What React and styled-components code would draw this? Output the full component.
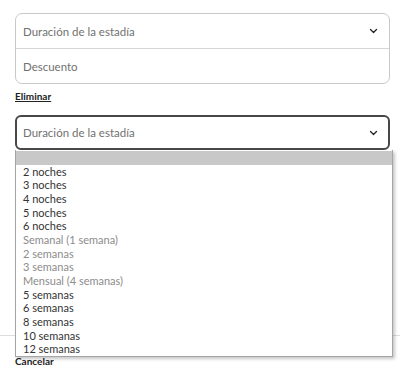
import React from 'react';
import styled, { createGlobalStyle } from 'styled-components';

const GlobalStyle = createGlobalStyle`
  body {
    margin: 0;
    background: #ffffff;
    font-family: Lato, "Open Sans", sans-serif;
  }
`;

const options = [
  { label: '', highlighted: true },
  { label: '2 noches' },
  { label: '3 noches' },
  { label: '4 noches' },
  { label: '5 noches' },
  { label: '6 noches' },
  { label: 'Semanal (1 semana)', disabled: true },
  { label: '2 semanas', disabled: true },
  { label: '3 semanas', disabled: true },
  { label: 'Mensual (4 semanas)', disabled: true },
  { label: '5 semanas' },
  { label: '6 semanas' },
  { label: '8 semanas' },
  { label: '10 semanas' },
  { label: '12 semanas' },
];

function Chevron() {
  return (
    <svg width="9" height="6" viewBox="0 0 9 6" fill="none">
      <path d="M1.5 1.5l3 3 3-3" stroke="#222" strokeWidth="1.3" strokeLinecap="round" strokeLinejoin="round" />
    </svg>
  );
}

export default function App() {
  return (
    <>
      <GlobalStyle />
      <Page>
        <Content>
          <FieldWrap>
            <Group>
              <SelectRow>
                <Placeholder>Duración de la estadía</Placeholder>
                <Chevron />
              </SelectRow>
              <InputRow>
                <Placeholder>Descuento</Placeholder>
              </InputRow>
            </Group>
            <LinkText>Eliminar</LinkText>
          </FieldWrap>
          <FieldWrap>
            <OpenSelect>
              <Placeholder>Duración de la estadía</Placeholder>
              <Chevron />
            </OpenSelect>
            <Options>
              {options.map((o, i) => (
                <Option key={i} highlighted={o.highlighted} disabled={o.disabled}>
                  {o.label}
                </Option>
              ))}
            </Options>
          </FieldWrap>
        </Content>
        <Footer>
          <LinkText>Cancelar</LinkText>
        </Footer>
      </Page>
    </>
  );
}

const Page = styled.div`
  width: 400px;
  height: 366px;
  overflow: hidden;
  padding-top: 13px;
  box-sizing: border-box;
`;

const Content = styled.div`
  padding: 0 10px 0 15px;
  display: flex;
  flex-direction: column;
  gap: 13px;
`;

const FieldWrap = styled.div`
  position: relative;
  display: flex;
  flex-direction: column;
`;

const Group = styled.div`
  border: 1px solid #c9c9c9;
  border-radius: 7px;
  display: flex;
  flex-direction: column;
`;

const SelectRow = styled.div`
  height: 34px;
  display: flex;
  align-items: center;
  justify-content: space-between;
  padding: 0 11px 0 7px;
  border-bottom: 1px solid #d6d6d6;
`;

const OpenSelect = styled.div`
  height: 31px;
  display: flex;
  align-items: center;
  justify-content: space-between;
  padding: 0 10px 0 6px;
  border: 2px solid #484848;
  border-radius: 6px;
`;

const InputRow = styled.div`
  height: 34px;
  display: flex;
  align-items: center;
  padding: 0 7px;
`;

const Placeholder = styled.span`
  font-size: 11.5px;
  color: #717171;
`;

const LinkText = styled.span`
  align-self: flex-start;
  margin-top: 6px;
  font-size: 10px;
  line-height: 12px;
  font-weight: 700;
  color: #222;
  text-decoration: underline;
`;

const Options = styled.div`
  position: absolute;
  top: 35px;
  left: 0;
  width: 376px;
  padding-top: 1px;
  background: #fff;
  border: 1px solid #a5a5a5;
  border-top: none;
  box-shadow: 2px 2px 3px rgba(0, 0, 0, 0.22);
  z-index: 5;
`;

const Option = styled.div`
  height: 13.67px;
  line-height: 13.67px;
  padding: 0 7px;
  font-size: 11px;
  white-space: nowrap;
  color: ${(p) => (p.disabled ? '#8c8c8c' : '#333')};
  background: ${(p) => (p.highlighted ? '#c8c8c8' : 'transparent')};
`;

const Footer = styled.div`
  margin-top: 185px;
  border-top: 1px solid #dddddd;
  padding: 13px 15px 0;
`;
